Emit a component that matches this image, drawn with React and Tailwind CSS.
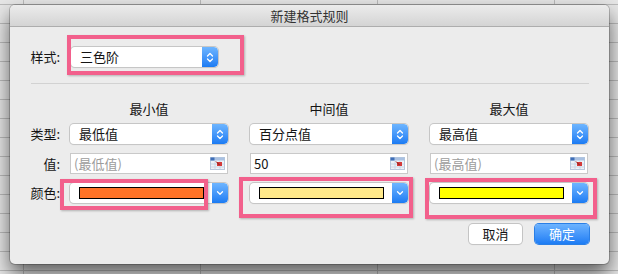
import React from 'react';

const FONT = "font-['Noto_Sans_CJK_SC','Noto_Sans',sans-serif]";

function Stepper() {
  return (
    <div className="w-[16px] h-full shrink-0 rounded-r-[4px] bg-gradient-to-b from-[#6db5ff] to-[#1a7bf3] flex items-center justify-center">
      <svg width="8" height="13" viewBox="0 0 8 13">
        <path d="M1.5 5 L4 2.5 L6.5 5 M1.5 8 L4 10.5 L6.5 8" stroke="white" strokeWidth="1.3" fill="none" strokeLinecap="round" strokeLinejoin="round" />
      </svg>
    </div>
  );
}

function DropArrow() {
  return (
    <div className="w-[16px] h-full shrink-0 rounded-r-[4px] bg-gradient-to-b from-[#6db5ff] to-[#1a7bf3] flex items-center justify-center">
      <svg width="8" height="6" viewBox="0 0 8 6">
        <path d="M1.5 1.8 L4 4.3 L6.5 1.8" stroke="white" strokeWidth="1.3" fill="none" strokeLinecap="round" strokeLinejoin="round" />
      </svg>
    </div>
  );
}

function Select({ text, w = 'w-[158px]' }) {
  return (
    <div className={`${w} h-[20px] flex bg-white rounded-[4px] shadow-[0_0_0_1px_#c6c6c6,0_1px_1px_rgba(0,0,0,0.12)] overflow-hidden`}>
      <div className="flex-1 pl-[9px] text-[13px] leading-[20px] text-[#141414]">{text}</div>
      <Stepper />
    </div>
  );
}

function RangeIcon() {
  return (
    <svg width="15" height="13" viewBox="0 0 15 13">
      <rect x="0.5" y="0.5" width="14" height="12" fill="#eef2f8" stroke="#b9c8dc" />
      <rect x="0.5" y="0.5" width="14" height="3" fill="#a9c1e2" />
      <rect x="0.5" y="0.5" width="4" height="3" fill="#3f6fb8" />
      <path d="M5 4 V12.5 M10 4 V12.5 M0.5 7 H14.5 M0.5 10 H14.5" stroke="#c3d0e2" strokeWidth="0.8" />
      <rect x="7" y="5" width="5" height="4" fill="#d33a3a" />
      <path d="M6 4.5 L9.5 8" stroke="#8a1c1c" strokeWidth="1" />
    </svg>
  );
}

function ValueInput({ text, placeholder }) {
  return (
    <div className="w-[158px] h-[21px] flex items-center justify-between bg-white border border-[#c9c9c9] pl-[3px] pr-[2px]">
      <span className={`text-[13px] leading-[19px] ${placeholder ? 'text-[#9c9c9c]' : 'text-[#141414]'}`}>{text}</span>
      <RangeIcon />
    </div>
  );
}

function ColorSelect({ color }) {
  return (
    <div className="w-[158px] h-[20px] flex items-center bg-white rounded-[4px] shadow-[0_0_0_1px_#c6c6c6,0_1px_1px_rgba(0,0,0,0.12)] overflow-hidden">
      <div className="flex-1 pl-[9px] pr-[8px] flex items-center">
        <div className={`w-full h-[12px] border border-black ${color}`} />
      </div>
      <DropArrow />
    </div>
  );
}

function Label({ children }) {
  return <div className="w-[51px] shrink-0 text-right pr-[1px] text-[13px] text-[#141414]">{children}</div>;
}

export default function App() {
  return (
    <div className={`w-[618px] h-[274px] overflow-hidden bg-[#e6e6e6] [background-image:linear-gradient(#bababa_1px,transparent_1px),linear-gradient(90deg,#bababa_1px,transparent_1px)] [background-size:177px_19px] [background-position:23px_4px] pt-[5px] pl-[10px] ${FONT}`}>
      <div className="relative w-[599px] h-[259px] rounded-[5px] bg-[#ececec] shadow-[0_0_0_1px_rgba(0,0,0,0.2),0_10px_20px_rgba(0,0,0,0.6)] flex flex-col">
        <div className="h-[22px] shrink-0 rounded-t-[5px] bg-gradient-to-b from-[#ececec] to-[#d4d4d4] border-b border-[#adadad] flex items-center justify-center text-[13px] text-[#333]">
          新建格式规则
        </div>

        <div className="mt-[20px] h-[20px] flex items-center">
          <Label>样式:</Label>
          <div className="ml-[10px]">
            <Select text="三色阶" w="w-[147px]" />
          </div>
        </div>

        <div className="mt-[16px] ml-[21px] mr-[20px] h-px bg-[#d2d2d2]" />

        <div className="mt-[16px] h-[18px] flex">
          <div className="w-[60px] shrink-0" />
          <div className="flex gap-[22px] text-[13px] leading-[18px] text-[#141414]">
            <div className="w-[158px] text-center">最小值</div>
            <div className="w-[158px] text-center">中间值</div>
            <div className="w-[158px] text-center">最大值</div>
          </div>
        </div>

        <div className="mt-[6px] h-[20px] flex items-center">
          <Label>类型:</Label>
          <div className="ml-[9px] flex gap-[22px]">
            <Select text="最低值" />
            <Select text="百分点值" />
            <Select text="最高值" />
          </div>
        </div>

        <div className="mt-[9px] h-[21px] flex items-center">
          <Label>值:</Label>
          <div className="ml-[9px] flex gap-[22px]">
            <ValueInput text="(最低值)" placeholder />
            <ValueInput text="50" />
            <ValueInput text="(最高值)" placeholder />
          </div>
        </div>

        <div className="mt-[9px] h-[20px] flex items-center">
          <Label>颜色:</Label>
          <div className="ml-[9px] flex gap-[22px]">
            <ColorSelect color="bg-[#ff7327]" />
            <ColorSelect color="bg-[#ffe98a]" />
            <ColorSelect color="bg-[#ffff00]" />
          </div>
        </div>

        <div className="mt-[21px] mr-[20px] flex justify-end gap-[13px]">
          <button className="w-[53px] h-[20px] rounded-[4px] bg-white shadow-[0_0_0_1px_#c4c4c4,0_1px_1px_rgba(0,0,0,0.12)] text-[13px] leading-[20px] text-[#141414]">取消</button>
          <button className="w-[54px] h-[20px] rounded-[4px] bg-gradient-to-b from-[#6cb3ff] to-[#1b7cf4] shadow-[0_0_0_1px_#2a7fe6] text-[13px] leading-[20px] text-white">确定</button>
        </div>

        <div className="absolute left-[57px] top-[30px] w-[177px] h-[40px] border-[4px] border-[#f2608c] shadow-[1px_1px_2px_rgba(0,0,0,0.25)]" />
        <div className="absolute left-[50px] top-[174px] w-[148px] h-[31px] border-[4px] border-[#f2608c] shadow-[1px_1px_2px_rgba(0,0,0,0.25)]" />
        <div className="absolute left-[229px] top-[172px] w-[174px] h-[41px] border-[4px] border-[#f2608c] shadow-[1px_1px_2px_rgba(0,0,0,0.25)]" />
        <div className="absolute left-[415px] top-[173px] w-[172px] h-[41px] border-[4px] border-[#f2608c] shadow-[1px_1px_2px_rgba(0,0,0,0.25)]" />
      </div>
    </div>
  );
}
